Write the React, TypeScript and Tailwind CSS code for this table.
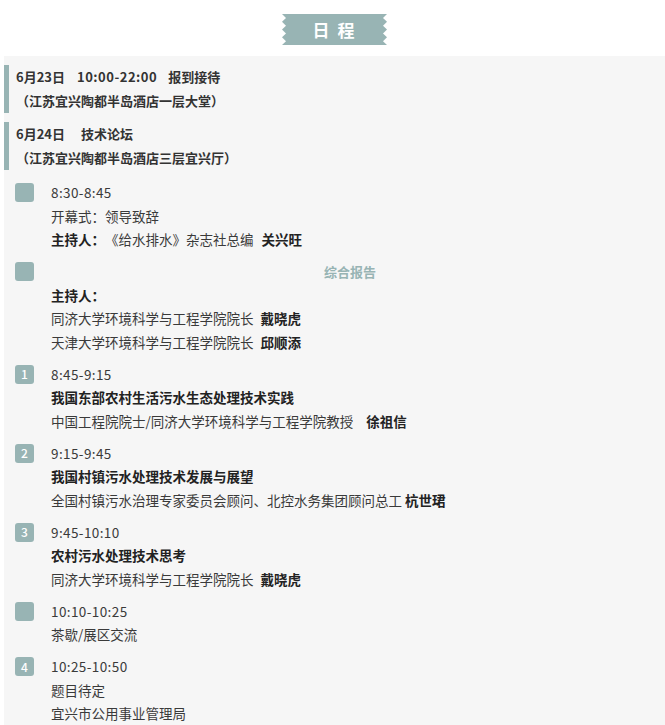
import React from "react";

const font = { fontFamily: '"Noto Sans CJK SC", "Noto Sans", sans-serif' };

function Banner() {
  const w = 105;
  const h = 31;
  const d = 4;
  const n = 4;
  const step = h / (n * 2);
  const left: string[] = [];
  const right: string[] = [];
  for (let i = 0; i <= n * 2; i++) {
    const y = i * step;
    left.push(`${i % 2 === 0 ? 0 : d},${y}`);
    right.push(`${i % 2 === 0 ? w : w - d},${y}`);
  }
  const pts = [...right, ...left.reverse()].join(" ");
  return (
    <div className="relative flex h-[31px] w-[105px] items-center justify-center">
      <svg className="absolute inset-0" width={w} height={h} viewBox={`0 0 ${w} ${h}`}>
        <polygon points={pts} fill="#98b4b4" />
      </svg>
      <span className="relative text-[17px] font-bold tracking-[2px] text-white">日&nbsp;程</span>
    </div>
  );
}

function HeadBlock({ l1, l2 }: { l1: React.ReactNode; l2: string }) {
  return (
    <div className="flex">
      <div className="w-[5px] shrink-0 bg-[#98b4b4]" />
      <div className="pl-[7px] text-[13px] font-bold leading-[24px] text-[#333333]">
        <div>{l1}</div>
        <div>{l2}</div>
      </div>
    </div>
  );
}

function Item({ num, children }: { num?: string; children: React.ReactNode }) {
  return (
    <div className="flex">
      <div className="ml-[11px] mt-[2.25px] flex h-[19px] w-[19px] shrink-0 items-center justify-center rounded-[3px] bg-[#98b4b4] text-[12px] font-medium leading-none text-white">
        {num}
      </div>
      <div className="ml-[17px] flex-1 text-[13.5px] leading-[23.5px] text-[#3a3a3a]">{children}</div>
    </div>
  );
}

const B = ({ children }: { children: React.ReactNode }) => (
  <span className="font-bold text-[#222222]">{children}</span>
);

const T = ({ children }: { children: React.ReactNode }) => (
  <div className="tracking-[0.4px]">{children}</div>
);

export default function App() {
  return (
    <div className="w-[665px] bg-white pl-[4px] [text-spacing-trim:space-all]" style={font}>
      <div className="flex justify-center pb-[11px] pt-[14px]">
        <Banner />
      </div>
      <div className="flex flex-col bg-[#f6f6f6] pb-[20px] pt-[9px]">
        <HeadBlock
          l1={
            <>
              6月23日<span className="ml-[12px] tracking-[0.5px]">10:00-22:00</span>
              <span className="ml-[11px]">报到接待</span>
            </>
          }
          l2="（江苏宜兴陶都半岛酒店一层大堂）"
        />
        <div className="mt-[9px]">
          <HeadBlock
            l1={
              <>
                6月24日<span className="ml-[16px]">技术论坛</span>
              </>
            }
            l2="（江苏宜兴陶都半岛酒店三层宜兴厅）"
          />
        </div>

        <div className="mt-[11px] flex flex-col gap-[8.5px]">
          <Item>
            <T>8:30-8:45</T>
            <div>开幕式：领导致辞</div>
            <div>
              <B>主持人：</B>《给水排水》杂志社总编<span className="ml-[8px]"><B>关兴旺</B></span>
            </div>
          </Item>
          <Item>
            <div className="pr-[16px] text-center text-[13px] font-bold text-[#98b4b4]">综合报告</div>
            <div>
              <B>主持人：</B>
            </div>
            <div>
              同济大学环境科学与工程学院院长<span className="ml-[7px]"><B>戴晓虎</B></span>
            </div>
            <div>
              天津大学环境科学与工程学院院长<span className="ml-[7px]"><B>邱顺添</B></span>
            </div>
          </Item>
          <Item num="1">
            <T>8:45-9:15</T>
            <div>
              <B>我国东部农村生活污水生态处理技术实践</B>
            </div>
            <div>
              中国工程院院士/同济大学环境科学与工程学院教授<span className="ml-[13px]"><B>徐祖信</B></span>
            </div>
          </Item>
          <Item num="2">
            <T>9:15-9:45</T>
            <div>
              <B>我国村镇污水处理技术发展与展望</B>
            </div>
            <div>
              全国村镇污水治理专家委员会顾问、北控水务集团顾问总工<span className="ml-[3px]"><B>杭世珺</B></span>
            </div>
          </Item>
          <Item num="3">
            <T>9:45-10:10</T>
            <div>
              <B>农村污水处理技术思考</B>
            </div>
            <div>
              同济大学环境科学与工程学院院长<span className="ml-[7px]"><B>戴晓虎</B></span>
            </div>
          </Item>
          <Item>
            <T>10:10-10:25</T>
            <div>茶歇/展区交流</div>
          </Item>
          <Item num="4">
            <T>10:25-10:50</T>
            <div>题目待定</div>
            <div>宜兴市公用事业管理局</div>
          </Item>
        </div>
      </div>
    </div>
  );
}
